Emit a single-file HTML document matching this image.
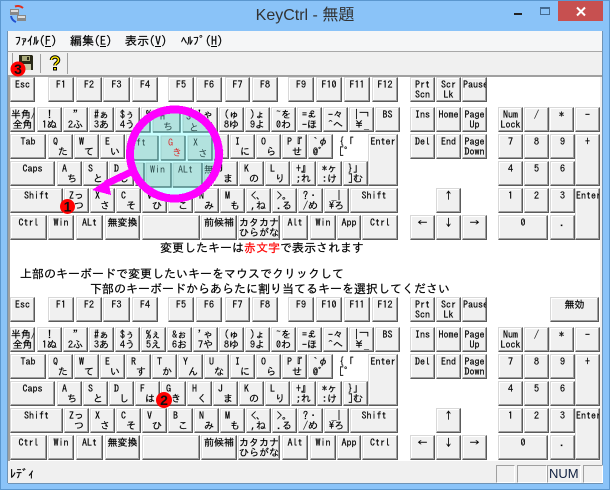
<!DOCTYPE html>
<html><head><meta charset="utf-8"><title>KeyCtrl - 無題</title>
<style>
html,body{margin:0;padding:0;background:#8ac3f8}
#w{position:relative;width:610px;height:490px;overflow:hidden;background:#8ac3f8;font-family:"IPAGothic","Noto Sans CJK JP",monospace;color:#000}
#w>div,#w>svg,#w>span{position:absolute}
.kb{left:0;width:610px;height:170px}
.r{position:absolute;left:0;width:610px;height:25px}
.r i{position:absolute;top:0;box-sizing:border-box;width:25px;height:25px;background:#f0f0f0;border:1px solid;border-color:#d8d8d8 #5a5a5a #5a5a5a #d8d8d8;box-shadow:inset -1px -1px #a0a0a0,inset 1px 1px #fff;font:normal 10px/10px "IPAGothic","Noto Sans CJK JP",monospace;text-align:center;white-space:pre;padding-top:2px;overflow:hidden;color:#000;-webkit-text-stroke:.2px #000}
.r i.n{background:none;border:0;box-shadow:none;padding-top:3px}
.m{font-size:12px;line-height:14px;white-space:pre;top:34px;-webkit-text-stroke:.2px #000}
.m u{text-decoration:underline}
.t{font-size:12px;line-height:13px;white-space:pre;left:0;-webkit-text-stroke:.2px currentColor}
</style></head><body>
<div id="w">
<div style="left:0;top:0;width:610px;height:490px;box-sizing:border-box;border:1px solid #5b97cf"></div>
<svg style="left:9px;top:5px" width="18" height="19" viewBox="0 0 18 19"><path d="M6 1.500A8 8 0 0 1 14 3" fill="none" stroke="#e03020" stroke-width="2"/><path d="M2 11A8 8 0 0 0 7 17" fill="none" stroke="#2050d0" stroke-width="2"/><rect x="1" y="4" width="9" height="6" fill="#888"/><rect x="2" y="5" width="7" height="2" fill="#ddd"/><rect x="8" y="10" width="9" height="6" fill="#888"/><rect x="9" y="11" width="7" height="2" fill="#ddd"/></svg>
<span style="left:205px;top:7px;width:200px;text-align:center;font:16px/18px 'Liberation Sans','Noto Sans CJK JP',sans-serif;color:#333">KeyCtrl - 無題</span>
<div style="left:514px;top:13px;width:8px;height:2px;background:#222"></div>
<div style="left:540px;top:7px;border:1px solid #446a90;border-top-width:2px;width:8px;height:5px"></div>
<div style="left:558px;top:1px;width:45px;height:20px;background:#c75050"></div>
<svg style="left:558px;top:1px" width="45" height="20"><path d="M19 6.500L27 14.500M27 6.500L19 14.500" stroke="#fff" stroke-width="2"/></svg>

<div style="left:8px;top:31px;width:594px;height:20px;background:#f5f6f7"></div>
<div style="left:8px;top:51px;width:594px;height:1px;background:#a8a8a8"></div>
<div style="left:8px;top:52px;width:594px;height:23px;background:#f0f0f0"></div>
<div style="left:8px;top:75px;width:594px;height:2px;background:#a0a0a0"></div>
<div style="left:7px;top:31px;width:1px;height:452px;background:#6f93b5"></div>
<div style="left:12px;top:53px;width:1px;height:21px;background:#a0a0a0"></div>
<div style="left:40px;top:54px;width:1px;height:19px;background:#a0a0a0"></div>
<div style="left:67px;top:53px;width:1px;height:21px;background:#a0a0a0"></div>
<span class="m" style="left:15px">ﾌｧｲﾙ(<u>F</u>)</span>
<span class="m" style="left:70px">編集(<u>E</u>)</span>
<span class="m" style="left:125px">表示(<u>V</u>)</span>
<span class="m" style="left:181px">ﾍﾙﾌﾟ(<u>H</u>)</span>
<svg style="left:18px;top:54px" width="16" height="17"><path d="M1 1H14L15 2V16H1Z" fill="#2a2a18"/><rect x="4" y="2" width="8" height="5" fill="#a8a878"/><rect x="9" y="3" width="2" height="3" fill="#2a2a18"/><rect x="4" y="10" width="9" height="6" fill="#c8c8a8"/></svg>
<svg style="left:49px;top:55px" width="12" height="16"><path d="M2.500 5C2.500 1 9.500 1 9.500 5C9.500 8 6 8 6 10.500" fill="none" stroke="#000" stroke-width="3.500"/><path d="M2.500 5C2.500 1 9.500 1 9.500 5C9.500 8 6 8 6 10.500" fill="none" stroke="#ffe800" stroke-width="1.500"/><rect x="4" y="12" width="4" height="3.500" fill="#000"/><rect x="5" y="13" width="2" height="1.500" fill="#ffe800"/></svg>

<div style="left:8px;top:77px;width:2px;height:384px;background:#a0a0a0"></div>
<div style="left:10px;top:77px;width:590px;height:384px;background:#fff"></div>
<div style="left:600px;top:77px;width:2px;height:385px;background:#f0f0f0"></div>
<div style="left:8px;top:461px;width:594px;height:22px;background:#f0f0f0"></div>
<div style="left:8px;top:483px;width:594px;height:1px;background:#6f93b5"></div>
<div style="left:602px;top:31px;width:1px;height:453px;background:#6f93b5"></div>
<span class="m" style="left:10px;top:467px">ﾚﾃﾞｨ</span>
<div style="left:496px;top:465px;width:17px;height:16px;border:1px solid;border-color:#a0a0a0 #fff #fff #a0a0a0"></div>
<div style="left:517px;top:465px;width:28px;height:16px;border:1px solid;border-color:#a0a0a0 #fff #fff #a0a0a0"></div>
<div style="left:547px;top:465px;width:32px;height:16px;border:1px solid;border-color:#a0a0a0 #fff #fff #a0a0a0"></div>
<div style="left:583px;top:465px;width:18px;height:16px;border:1px solid;border-color:#a0a0a0 #fff #fff #a0a0a0"></div>
<span style="left:549px;top:466px;font:13px/16px 'Liberation Sans',sans-serif;color:#102040">NUM</span>

<div class="kb" style="top:77px">
<div class="r" style="top:0"><i style="left:10px">Esc</i><i style="left:48px;width:26px">F1</i><i style="left:76px;width:26px">F2</i><i style="left:103px;width:27px">F3</i><i style="left:132px;width:26px">F4</i><i style="left:168px;width:26px">F5</i><i style="left:196px;width:26px">F6</i><i style="left:225px;width:25px">F7</i><i style="left:252px;width:26px">F8</i><i style="left:288px;width:26px">F9</i><i style="left:316px;width:26px">F10</i><i style="left:344px;width:26px">F11</i><i style="left:372px;width:26px">F12</i><i style="left:410px">Prt
Scn</i><i style="left:436px">Scr
Lk</i><i style="left:462px">Pause</i></div>
<div class="r" style="top:30px"><i style="left:10px">半角/
全角</i><i style="left:37px">!
1ぬ</i><i style="left:63px">"
2ふ</i><i style="left:89px">#ぁ
3あ</i><i style="left:115px">$ぅ
4う</i><i style="left:141px">%ぇ
5え</i><i style="left:167px">&amp;ぉ
6お</i><i style="left:193px">'ゃ
7や</i><i style="left:219px">(ゅ
8ゆ</i><i style="left:245px">)ょ
9よ</i><i style="left:271px">~を
0わ</i><i style="left:297px">=£
-ほ</i><i style="left:323px">-々
^へ</i><i style="left:349px">|¬
¥_</i><i style="left:375px">BS</i><i style="left:410px">Ins</i><i style="left:436px">Home</i><i style="left:462px">Page
Up</i><i style="left:498px">Num
Lock</i><i style="left:524px">/</i><i style="left:549px">*</i><i style="left:575px">-</i></div>
<div class="r" style="top:57px"><i style="left:10px;width:36px">Tab</i><i style="left:48px">Q  
 た</i><i style="left:74px">W  
 て</i><i style="left:100px">E  
 い</i><i style="left:126px">R  
 す</i><i style="left:152px">T  
 か</i><i style="left:178px">Y  
 ん</i><i style="left:204px">U  
 な</i><i style="left:230px">I  
 に</i><i style="left:256px">O  
 ら</i><i style="left:282px">P『
 せ</i><i style="left:308px">`φ
@゛</i><i class="n" style="left:334px">{「
[°</i><i style="left:368px;width:30px;height:52px">Enter</i><i style="left:410px">Del</i><i style="left:436px">End</i><i style="left:462px">Page
Down</i><i style="left:498px">7</i><i style="left:524px">8</i><i style="left:550px">9</i><i style="left:575px;height:52px">+</i></div>
<div class="r" style="top:84px"><i style="left:10px;width:45px">Caps</i><i style="left:57px">A  
 ち</i><i style="left:83px">S  
 と</i><i style="left:109px">D  
 し</i><i style="left:135px">F  
 は</i><i style="left:161px">G  
 き</i><i style="left:187px">H  
 く</i><i style="left:213px">J  
 ま</i><i style="left:239px">K  
 の</i><i style="left:265px">L  
 り</i><i style="left:291px">+』
;れ</i><i style="left:317px">*ヶ
:け</i><i style="left:343px">}」
]む</i><i style="left:498px">4</i><i style="left:524px">5</i><i style="left:550px">6</i></div>
<div class="r" style="top:111px"><i style="left:10px;width:53px">Shift</i><i style="left:64px">Zっ
 つ</i><i style="left:90px">X  
 さ</i><i style="left:116px">C  
 そ</i><i style="left:142px">V  
 ひ</i><i style="left:168px">B  
 こ</i><i style="left:194px">N  
 み</i><i style="left:220px">M  
 も</i><i style="left:246px">&lt;、
,ね</i><i style="left:272px">&gt;。
.る</i><i style="left:298px">?・
/め</i><i style="left:324px">_|
\ろ</i><i style="left:350px;width:48px">Shift</i><i style="left:436px">↑</i><i style="left:498px">1</i><i style="left:524px">2</i><i style="left:550px">3</i><i style="left:575px;height:52px">Enter</i></div>
<div class="r" style="top:138px"><i style="left:10px;width:37px">Ctrl</i><i style="left:48px;width:26px">Win</i><i style="left:76px;width:27px">ALt</i><i style="left:105px;width:35px">無変換</i><i style="left:142px;width:58px"></i><i style="left:201px;width:36px">前候補</i><i style="left:238px;width:42px">カタカナ
ひらがな</i><i style="left:282px;width:26px">Alt</i><i style="left:310px;width:26px">Win</i><i style="left:337px;width:24px">App</i><i style="left:362px;width:36px">Ctrl</i><i style="left:410px">←</i><i style="left:436px">↓</i><i style="left:462px">→</i><i style="left:498px;width:50px">0</i><i style="left:550px">.</i></div>
</div>

<span class="t" style="left:160px;top:242px">変更したキーは<span style="color:#f00">赤文字</span>で表示されます</span>
<span class="t" style="left:20px;top:268px">上部のキーボードで変更したいキーをマウスでクリックして</span>
<span class="t" style="left:90px;top:283px">下部のキーボードからあらたに割り当てるキーを選択してください</span>

<div class="kb" style="top:297px">
<div class="r" style="top:0"><i style="left:10px">Esc</i><i style="left:48px;width:26px">F1</i><i style="left:76px;width:26px">F2</i><i style="left:103px;width:27px">F3</i><i style="left:132px;width:26px">F4</i><i style="left:168px;width:26px">F5</i><i style="left:196px;width:26px">F6</i><i style="left:225px;width:25px">F7</i><i style="left:252px;width:26px">F8</i><i style="left:288px;width:26px">F9</i><i style="left:316px;width:26px">F10</i><i style="left:344px;width:26px">F11</i><i style="left:372px;width:26px">F12</i><i style="left:410px">Prt
Scn</i><i style="left:436px">Scr
Lk</i><i style="left:462px">Pause</i><i style="left:550px;width:49px">無効</i></div>
<div class="r" style="top:30px"><i style="left:10px">半角/
全角</i><i style="left:37px">!
1ぬ</i><i style="left:63px">"
2ふ</i><i style="left:89px">#ぁ
3あ</i><i style="left:115px">$ぅ
4う</i><i style="left:141px">%ぇ
5え</i><i style="left:167px">&amp;ぉ
6お</i><i style="left:193px">'ゃ
7や</i><i style="left:219px">(ゅ
8ゆ</i><i style="left:245px">)ょ
9よ</i><i style="left:271px">~を
0わ</i><i style="left:297px">=£
-ほ</i><i style="left:323px">-々
^へ</i><i style="left:349px">|¬
¥_</i><i style="left:375px">BS</i><i style="left:410px">Ins</i><i style="left:436px">Home</i><i style="left:462px">Page
Up</i><i style="left:498px">Num
Lock</i><i style="left:524px">/</i><i style="left:549px">*</i><i style="left:575px">-</i></div>
<div class="r" style="top:57px"><i style="left:10px;width:36px">Tab</i><i style="left:48px">Q  
 た</i><i style="left:74px">W  
 て</i><i style="left:100px">E  
 い</i><i style="left:126px">R  
 す</i><i style="left:152px">T  
 か</i><i style="left:178px">Y  
 ん</i><i style="left:204px">U  
 な</i><i style="left:230px">I  
 に</i><i style="left:256px">O  
 ら</i><i style="left:282px">P『
 せ</i><i style="left:308px">`φ
@゛</i><i class="n" style="left:334px">{「
[°</i><i style="left:368px;width:30px;height:52px">Enter</i><i style="left:410px">Del</i><i style="left:436px">End</i><i style="left:462px">Page
Down</i><i style="left:498px">7</i><i style="left:524px">8</i><i style="left:550px">9</i><i style="left:575px;height:52px">+</i></div>
<div class="r" style="top:84px"><i style="left:10px;width:45px">Caps</i><i style="left:57px">A  
 ち</i><i style="left:83px">S  
 と</i><i style="left:109px">D  
 し</i><i style="left:135px">F  
 は</i><i style="left:161px">G  
 き</i><i style="left:187px">H  
 く</i><i style="left:213px">J  
 ま</i><i style="left:239px">K  
 の</i><i style="left:265px">L  
 り</i><i style="left:291px">+』
;れ</i><i style="left:317px">*ヶ
:け</i><i style="left:343px">}」
]む</i><i style="left:498px">4</i><i style="left:524px">5</i><i style="left:550px">6</i></div>
<div class="r" style="top:111px"><i style="left:10px;width:53px">Shift</i><i style="left:64px">Zっ
 つ</i><i style="left:90px">X  
 さ</i><i style="left:116px">C  
 そ</i><i style="left:142px">V  
 ひ</i><i style="left:168px">B  
 こ</i><i style="left:194px">N  
 み</i><i style="left:220px">M  
 も</i><i style="left:246px">&lt;、
,ね</i><i style="left:272px">&gt;。
.る</i><i style="left:298px">?・
/め</i><i style="left:324px">_|
\ろ</i><i style="left:350px;width:48px">Shift</i><i style="left:436px">↑</i><i style="left:498px">1</i><i style="left:524px">2</i><i style="left:550px">3</i><i style="left:575px;height:52px">Enter</i></div>
<div class="r" style="top:138px"><i style="left:10px;width:37px">Ctrl</i><i style="left:48px;width:26px">Win</i><i style="left:76px;width:27px">ALt</i><i style="left:105px;width:35px">無変換</i><i style="left:142px;width:58px"></i><i style="left:201px;width:36px">前候補</i><i style="left:238px;width:42px">カタカナ
ひらがな</i><i style="left:282px;width:26px">Alt</i><i style="left:310px;width:26px">Win</i><i style="left:337px;width:24px">App</i><i style="left:362px;width:36px">Ctrl</i><i style="left:410px">←</i><i style="left:436px">↓</i><i style="left:462px">→</i><i style="left:498px;width:50px">0</i><i style="left:550px">.</i></div>
</div>

<svg style="left:0;top:0" width="610" height="490" viewBox="0 0 610 490">
<defs><clipPath id="c"><circle cx="174.500" cy="154" r="42"/></clipPath></defs>
<g clip-path="url(#c)" font-family="IPAGothic,'Noto Sans CJK JP',monospace" font-size="10" fill="#2a4a4a">
<rect x="125" y="100" width="100" height="110" fill="#c8ffff"/>
<g fill="#b2e2de" stroke="#9ccfcb" stroke-width="1">
<rect x="126" y="100" width="24" height="32"/><rect x="153" y="100" width="27" height="32"/><rect x="183" y="100" width="27" height="32"/><rect x="212" y="100" width="20" height="32"/>
<rect x="120" y="136" width="38" height="24"/><rect x="161" y="136" width="24" height="24"/><rect x="188" y="136" width="24" height="24"/><rect x="214" y="136" width="20" height="24"/>
<rect x="120" y="163" width="24" height="24"/><rect x="146" y="163" width="25" height="24"/><rect x="173" y="163" width="29" height="24"/><rect x="204" y="163" width="26" height="24"/>
</g>
<path d="M126 132H150V100M153 132H180V100M183 132H210V100M212 132H232M120 160H158V136M161 160H185V136M188 160H212V136M214 160H234M120 187H144V163M146 187H171V163M173 187H202V163M204 187H230" fill="none" stroke="#4f8484" stroke-width="1.500"/>
<text x="160" y="120">H</text><text x="163" y="130">ち</text>
<text x="186" y="120">S</text><text x="189" y="131">と</text>
<text x="136" y="146">ft</text>
<text x="168" y="146" fill="#d83030">G</text><text x="172" y="156" fill="#d83030">き</text>
<text x="193" y="146">X</text><text x="198" y="157">さ</text>
<text x="150" y="173">Win</text><text x="178" y="173">ALt</text><text x="204" y="173">無</text>
</g>
<circle cx="174.500" cy="154" r="44.500" fill="none" stroke="#ff00ff" stroke-width="8" shape-rendering="crispEdges"/>
<path d="M133 171L106 184" stroke="#ff00ff" stroke-width="7" fill="none" shape-rendering="crispEdges"/>
<path d="M92 190L108 179L111 195Z" fill="#ff00ff" shape-rendering="crispEdges"/>
<circle cx="18" cy="69" r="7.500" fill="#f00"/>
<circle cx="67.500" cy="206.500" r="7.500" fill="#f00"/>
<circle cx="164" cy="400" r="8" fill="#f00"/>
<g font-family="'Liberation Sans',sans-serif" font-size="14" font-weight="bold" fill="#111" text-anchor="middle">
<text x="18" y="74">3</text><text x="67.500" y="211.500">1</text><text x="164" y="405">2</text>
</g>
</svg>
</div>
</body></html>
